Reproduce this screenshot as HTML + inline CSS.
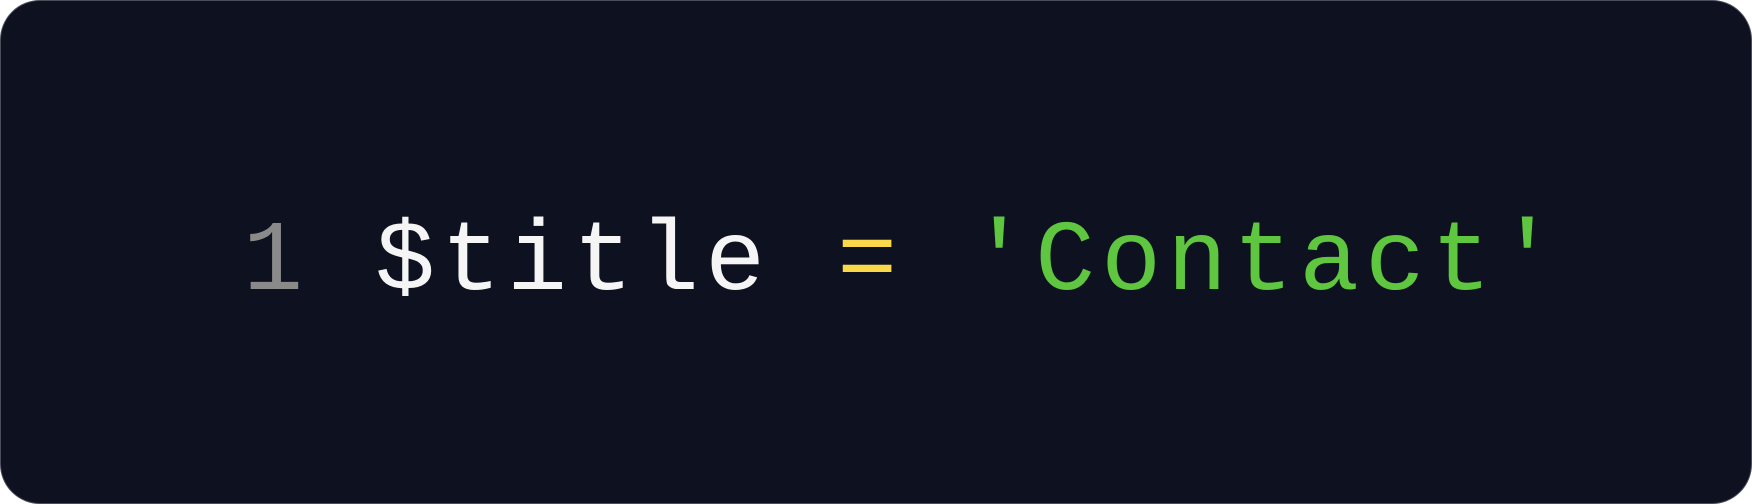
<!DOCTYPE html>
<html><head><style>
html,body{margin:0;padding:0;background:#fff;width:1752px;height:504px;overflow:hidden}
.box{position:absolute;left:0;top:0;width:1750px;height:502px;background:#0d1120;border:1px solid #4a4e5a;border-radius:40px}
.t{position:absolute;left:243px;top:264px;font-family:"Liberation Mono",monospace;font-size:100px;letter-spacing:6px;line-height:0;white-space:pre;color:#f5f5f5}
.g{color:#8a8a8a}.y{color:#f9d849}.c{color:#5fc63f}
</style></head><body>
<div class="box"></div>
<div class="t"><span class="g">1</span> $title <span class="y">=</span> <span class="c">'Contact'</span></div>
</body></html>
